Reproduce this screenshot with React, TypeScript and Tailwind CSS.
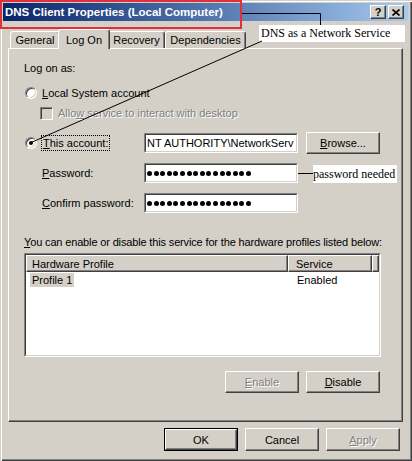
import React from 'react';

// classic win2000 bevels
const raised =
  'bg-[#d4d0c8] border border-t-white border-l-white border-r-[#404040] border-b-[#404040] shadow-[inset_-1px_-1px_#808080]';
const disabledText = 'text-[#808080] [text-shadow:1px_1px_0_#fff]';

const Radio: React.FC<{ checked?: boolean }> = ({ checked }) => (
  <div className="relative w-[12px] h-[12px] shrink-0 rounded-full bg-white border border-t-[#808080] border-l-[#808080] border-r-white border-b-white shadow-[inset_1px_1px_#404040,inset_-1px_-1px_#d4d0c8]">
    {checked && (
      <div className="absolute left-[3px] top-[3px] w-[4px] h-[4px] rounded-full bg-black" />
    )}
  </div>
);

const TextBox: React.FC<{ children?: React.ReactNode }> = ({ children }) => (
  <div className="w-[154px] h-[20px] shrink-0 border border-t-[#808080] border-l-[#808080] border-r-white border-b-white">
    <div className="w-full h-full bg-white border border-t-[#404040] border-l-[#404040] border-r-[#d4d0c8] border-b-[#d4d0c8] flex items-center pl-[1px] overflow-hidden whitespace-nowrap">
      {children}
    </div>
  </div>
);

const Dots: React.FC = () => (
  <div className="flex items-center gap-[1.6px]">
    {Array.from({ length: 16 }).map((_, i) => (
      <span key={i} className="block w-[5px] h-[5px] rounded-full bg-black" />
    ))}
  </div>
);

const Button: React.FC<{ children: React.ReactNode; disabled?: boolean; className?: string }> = ({
  children,
  disabled,
  className = '',
}) => (
  <div className={`${raised} h-[22px] flex items-center justify-center ${className}`}>
    <span className={disabled ? disabledText : ''}>{children}</span>
  </div>
);

const Tab: React.FC<{ label: string; className: string; active?: boolean }> = ({ label, className, active }) =>
  active ? (
    <div
      className={`relative z-10 -mx-[2px] mb-[-1px] h-[20px] flex items-center justify-center bg-[#d4d0c8] border-t border-l border-r border-t-white border-l-white border-r-[#404040] shadow-[inset_-1px_0_#808080] rounded-t-[3px] ${className}`}
    >
      {label}
    </div>
  ) : (
    <div
      className={`h-[17px] flex items-center justify-center bg-[#d4d0c8] border-t border-l border-r border-t-white border-l-white border-r-[#404040] shadow-[inset_-1px_0_#808080] rounded-t-[3px] ${className}`}
    >
      {label}
    </div>
  );

export default function App() {
  return (
    <div className="relative w-[412px] h-[461px] overflow-hidden bg-[#d4d0c8] text-[11px] leading-[14px] text-black font-['Liberation_Sans',Arial,sans-serif] shadow-[inset_1px_1px_#d4d0c8,inset_2px_2px_#fff,inset_-1px_-1px_#404040,inset_-2px_-2px_#808080]">
      <div className="flex flex-col pt-[3px] px-[3px]">
        {/* Title bar */}
        <div className="h-[18px] mr-[1px] flex items-center justify-between pl-[2px] pr-[4px] bg-gradient-to-r from-[#0a246a] to-[#a6caf0]">
          <span className="text-white font-bold text-[11.5px] whitespace-nowrap">
            DNS Client Properties (Local Computer)
          </span>
          <div className="flex gap-[2px]">
            <div className={`${raised} w-[16px] h-[14px] flex items-center justify-center`}>
              <span className="font-bold text-[11px] leading-none">?</span>
            </div>
            <div className={`${raised} w-[16px] h-[14px] flex items-center justify-center`}>
              <svg width="8" height="7" viewBox="0 0 8 7">
                <path d="M0.5 0.5 L7.5 6.5 M7.5 0.5 L0.5 6.5" stroke="#000" strokeWidth="1.6" />
              </svg>
            </div>
          </div>
        </div>

        {/* Client area */}
        <div className="pl-[5px] pr-[6px]">
          {/* Tabs */}
          <div className="relative z-10 h-[19px] mt-[8px] pl-[2px] flex items-end">
            <Tab label="General" className="w-[50px]" />
            <Tab label="Log On" className="w-[52px]" active />
            <Tab label="Recovery" className="w-[57px]" />
            <Tab label="Dependencies" className="w-[81px]" />
          </div>

          {/* Tab page */}
          <div className="relative z-0 h-[374px] border border-t-white border-l-white border-r-[#404040] border-b-[#404040] shadow-[inset_-1px_-1px_#808080] pl-[15px] pt-[11px]">
            <div className="h-[16px] flex items-center">Log on as:</div>

            <div className="h-[16px] mt-[9px] flex items-center">
              <div className="ml-[1px]">
                <Radio />
              </div>
              <span className="ml-[5px]">
                <u>L</u>ocal System account
              </span>
            </div>

            <div className="h-[16px] mt-[4px] flex items-center">
              <div className="ml-[16px] w-[13px] h-[13px] bg-[#d4d0c8] border border-t-[#808080] border-l-[#808080] border-r-white border-b-white shadow-[inset_1px_1px_#404040,inset_-1px_-1px_#d4d0c8]" />
              <span className={`ml-[5px] ${disabledText}`}>
                Allo<u>w</u> service to interact with desktop
              </span>
            </div>

            <div className="h-[22px] mt-[11px] flex items-center">
              <div className="w-[120px] flex items-center">
                <div className="ml-[1px]">
                  <Radio checked />
                </div>
                <div className="ml-[4px] h-[16px] px-[1px] border border-dotted border-black flex items-center">
                  <span>
                    <u>T</u>his account:
                  </span>
                </div>
              </div>
              <TextBox>NT AUTHORITY\NetworkServ</TextBox>
              <Button className="ml-[8px] w-[74px]">
                <u>B</u>rowse...
              </Button>
            </div>

            <div className="h-[20px] mt-[9px] flex items-center">
              <div className="w-[120px] pl-[18px]">
                <u>P</u>assword:
              </div>
              <TextBox>
                <Dots />
              </TextBox>
            </div>

            <div className="h-[20px] mt-[10px] flex items-center">
              <div className="w-[120px] pl-[18px]">
                <u>C</u>onfirm password:
              </div>
              <TextBox>
                <Dots />
              </TextBox>
            </div>

            <div className="h-[16px] mt-[21px] flex items-center tracking-[-0.15px] whitespace-nowrap">
              <span>
                <u>Y</u>ou can enable or disable this service for the hardware profiles listed below:
              </span>
            </div>

            {/* Hardware profile list */}
            <div className="mt-[3px] w-[357px] h-[104px] border border-t-[#808080] border-l-[#808080] border-r-white border-b-white">
              <div className="w-full h-full bg-white border border-t-[#404040] border-l-[#404040] border-r-[#d4d0c8] border-b-[#d4d0c8] overflow-hidden">
                <div className="flex h-[17px]">
                  <div className={`${raised} w-[262px] pl-[5px] flex items-center`}>Hardware Profile</div>
                  <div className={`${raised} w-[84px] pl-[7px] flex items-center`}>Service</div>
                  <div className={`${raised} flex-1`} />
                </div>
                <div className="flex h-[15px] items-center">
                  <div className="w-[262px] pl-[4px]">
                    <span className="bg-[#d4d0c8] px-[2px] py-[1px]">Profile 1</span>
                  </div>
                  <div className="pl-[9px]">Enabled</div>
                </div>
              </div>
            </div>

            <div className="mt-[14px] w-[356px] flex justify-end gap-[7px]">
              <Button disabled className="w-[74px]">
                <u>E</u>nable
              </Button>
              <Button className="w-[74px]">
                <u>D</u>isable
              </Button>
            </div>
          </div>
        </div>

        {/* Dialog buttons */}
        <div className="mt-[6px] pr-[9px] flex justify-end gap-[7px]">
          <div className="w-[74px] h-[23px] border border-black">
            <Button className="w-full h-full">OK</Button>
          </div>
          <Button className="w-[74px] h-[23px]">Cancel</Button>
          <Button disabled className="w-[74px] h-[23px]">
            <u>A</u>pply
          </Button>
        </div>
      </div>

      {/* Annotations */}
      <div className="absolute left-0 top-0 w-[242px] h-[29px] border-2 border-[#e0303a]" />
      <div className="absolute left-[259px] top-[25px] w-[146px] h-[17px] bg-white pl-[2px] text-[12px] leading-[17px] font-['Liberation_Serif','Times_New_Roman',serif] whitespace-nowrap">
        DNS as a Network Service
      </div>
      <div className="absolute left-[313px] top-[165px] w-[84px] h-[18px] bg-white text-[12px] leading-[18px] font-['Liberation_Serif','Times_New_Roman',serif] whitespace-nowrap">
        password needed
      </div>
      <svg className="absolute left-0 top-0 pointer-events-none" width="412" height="461">
        <polyline points="242,13.5 320.5,13.5 320.5,25" fill="none" stroke="#000" strokeWidth="1" />
        <line x1="262" y1="41" x2="30" y2="143" stroke="#000" strokeWidth="1" />
        <line x1="298" y1="173.5" x2="313" y2="173.5" stroke="#000" strokeWidth="1" />
      </svg>
    </div>
  );
}
